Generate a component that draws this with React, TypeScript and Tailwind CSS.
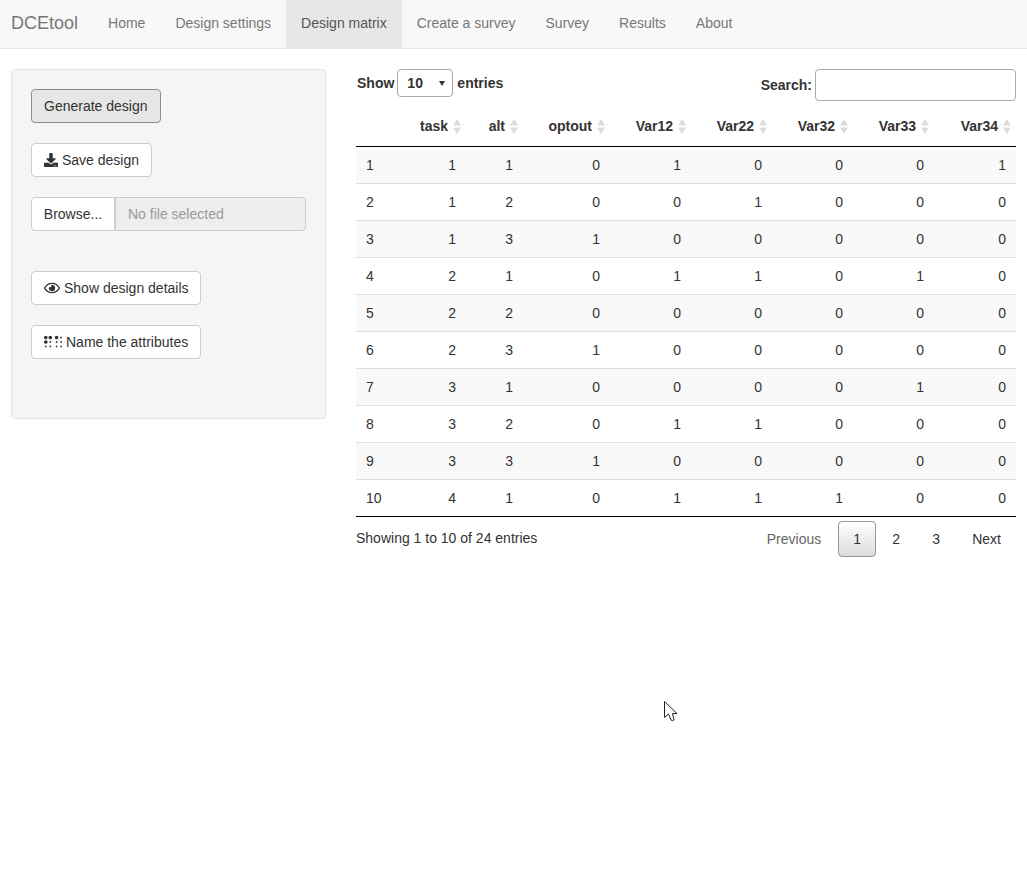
import { FaBraille, FaDownload, FaRegEye } from 'react-icons/fa';

const navItems = ['Home', 'Design settings', 'Design matrix', 'Create a survey', 'Survey', 'Results', 'About'];

const columns = [
    { name: 'task', width: 'w-[56px]' },
    { name: 'alt', width: 'w-[57px]' },
    { name: 'optout', width: 'w-[87px]' },
    { name: 'Var12', width: 'w-[81px]' },
    { name: 'Var22', width: 'w-[81px]' },
    { name: 'Var32', width: 'w-[81px]' },
    { name: 'Var33', width: 'w-[81px]' },
    { name: 'Var34', width: 'w-[82px]' },
];

const rows = [
    [1, 1, 0, 1, 0, 0, 0, 1],
    [1, 2, 0, 0, 1, 0, 0, 0],
    [1, 3, 1, 0, 0, 0, 0, 0],
    [2, 1, 0, 1, 1, 0, 1, 0],
    [2, 2, 0, 0, 0, 0, 0, 0],
    [2, 3, 1, 0, 0, 0, 0, 0],
    [3, 1, 0, 0, 0, 0, 1, 0],
    [3, 2, 0, 1, 1, 0, 0, 0],
    [3, 3, 1, 0, 0, 0, 0, 0],
    [4, 1, 0, 1, 1, 1, 0, 0],
];

const buttonClass = 'flex h-[34px] items-center rounded border border-[#ccc] bg-white px-3 text-sm text-[#333]';

function SortIcon() {
    return (
        <svg width="8" height="15" viewBox="0 0 8 15" className="shrink-0" fill="#dcdcdc">
            <path d="M4 0 L8 6.5 L0 6.5 Z" />
            <path d="M0 8.5 L8 8.5 L4 15 Z" />
        </svg>
    );
}

export default function App() {
    return (
        <div className="relative min-h-[882px] bg-white font-['Liberation_Sans',Arial,sans-serif] text-sm text-[#333]">
            <nav className="flex h-[49px] border-b border-[#e7e7e7] bg-[#f8f8f8] pl-[11px]">
                <div className="mr-[15px] text-lg leading-[46px] text-[#777]">DCEtool</div>
                {navItems.map((item) => (
                    <div
                        key={item}
                        className={
                            item === 'Design matrix'
                                ? 'bg-[#e7e7e7] px-[15px] leading-[46px] text-[#555]'
                                : 'px-[15px] leading-[46px] text-[#777]'
                        }
                    >
                        {item}
                    </div>
                ))}
            </nav>

            <div className="flex items-start gap-[30px] pl-[11px] pt-5">
                <div className="flex w-[315px] flex-col rounded border border-[#e3e3e3] bg-[#f5f5f5] px-[19px] pb-[59px] pt-[19px]">
                    <button className="h-[34px] w-fit rounded border border-[#8c8c8c] bg-[#e6e6e6] px-3 text-sm text-[#333]">
                        Generate design
                    </button>
                    <button className={`${buttonClass} mt-5 w-fit gap-1`}>
                        <FaDownload size={14} />
                        Save design
                    </button>
                    <div className="mt-5 flex h-[34px] w-[275px]">
                        <div className="flex w-[84px] items-center justify-center rounded-l border border-[#ccc] bg-white text-[#333]">
                            Browse...
                        </div>
                        <div className="flex flex-1 items-center rounded-r border border-[#ccc] bg-[#eee] pl-3 text-[#999]">
                            No file selected
                        </div>
                    </div>
                    <button className={`${buttonClass} mt-10 w-[170px] gap-1 whitespace-nowrap`}>
                        <FaRegEye size={16} className="shrink-0" />
                        Show design details
                    </button>
                    <button className={`${buttonClass} mt-5 w-[170px] gap-1 whitespace-nowrap`}>
                        <FaBraille size={18} className="shrink-0" />
                        Name the attributes
                    </button>
                </div>

                <div className="w-[660px]">
                    <div className="flex h-[37px] items-start justify-between">
                        <div className="flex h-7 items-center pl-px font-bold">
                            Show
                            <div className="relative ml-[3px] mr-1">
                                <select
                                    defaultValue="10"
                                    className="h-7 w-14 appearance-none rounded border border-[#aaa] bg-white pl-[9px] text-sm font-bold text-[#333]"
                                >
                                    <option value="10">10</option>
                                    <option value="25">25</option>
                                    <option value="50">50</option>
                                </select>
                                <svg width="6" height="5" viewBox="0 0 6 5" className="absolute right-[8px] top-[12px]" fill="#333">
                                    <path d="M0 0 L6 0 L3 5 Z" />
                                </svg>
                            </div>
                            entries
                        </div>
                        <div className="flex items-center gap-[3px] font-bold">
                            <span>Search:</span>
                            <input className="h-8 w-[201px] rounded border border-[#aaa] bg-white" />
                        </div>
                    </div>

                    <table className="w-[660px] table-fixed border-separate border-spacing-0 border-b border-black">
                        <thead>
                            <tr>
                                <th className="h-[41px] w-[54px] border-b border-black" />
                                {columns.map((col) => (
                                    <th key={col.name} className={`${col.width} h-[41px] border-b border-black pr-[5px]`}>
                                        <div className="flex items-center justify-end gap-[5px]">
                                            {col.name}
                                            <SortIcon />
                                        </div>
                                    </th>
                                ))}
                            </tr>
                        </thead>
                        <tbody>
                            {rows.map((row, i) => (
                                <tr key={i} className={i % 2 === 0 ? 'bg-[#f9f9f9]' : 'bg-white'}>
                                    <td className={i === 0 ? 'h-9 px-[10px]' : 'h-[37px] border-t border-[#ddd] px-[10px]'}>{i + 1}</td>
                                    {row.map((value, j) => (
                                        <td
                                            key={j}
                                            className={i === 0 ? 'h-9 px-[10px] text-right' : 'h-[37px] border-t border-[#ddd] px-[10px] text-right'}
                                        >
                                            {value}
                                        </td>
                                    ))}
                                </tr>
                            ))}
                        </tbody>
                    </table>

                    <div className="flex items-start justify-between">
                        <div className="pt-[11px]">Showing 1 to 10 of 24 entries</div>
                        <div className="mt-1 flex items-center">
                            <span className="px-[15px] leading-9 text-[#666]">Previous</span>
                            <span className="ml-[2px] flex h-9 w-[38px] items-center justify-center rounded-sm border border-[#979797] bg-gradient-to-b from-white to-[#dcdcdc]">
                                1
                            </span>
                            <span className="ml-px w-[38px] text-center leading-9">2</span>
                            <span className="ml-[2px] w-[38px] text-center leading-9">3</span>
                            <span className="ml-[2px] px-[15px] leading-9">Next</span>
                        </div>
                    </div>
                </div>
            </div>

            {/* mouse pointer caught in the screenshot */}
            <svg
                width="14"
                height="21"
                viewBox="0 0 14 21"
                className="absolute left-[664px] top-[701px]"
                fill="white"
                stroke="#222"
                strokeWidth="1"
            >
                <path d="M0.5 0.5 L0.5 16.5 L4.5 13 L7 19 Q8.5 20.5 10 19 L8.5 12.5 L13 12.5 Z" />
            </svg>
        </div>
    );
}
